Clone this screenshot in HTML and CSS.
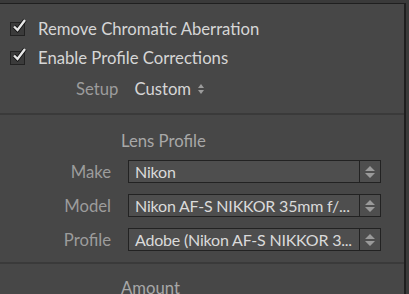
FILE: index.html
```html
<!DOCTYPE html>
<html lang="en">
<head>
    <meta charset="UTF-8">
    <title>Lens Corrections</title>
    <link rel="stylesheet" href="styles.css">
</head>
<body>
    <div class="frame">
        <div class="panel">
            <div class="checks">
                <label class="check-row"><span class="box"><svg viewBox="0 0 16 16" width="16" height="16"><path d="M3 8.5 L6.5 12 L14 2" fill="none" stroke="#111" stroke-width="4"/><path d="M3 8.5 L6.5 12 L14 2" fill="none" stroke="#e6e6e6" stroke-width="2.4"/></svg></span>Remove Chromatic Aberration</label>
                <label class="check-row"><span class="box"><svg viewBox="0 0 16 16" width="16" height="16"><path d="M3 8.5 L6.5 12 L14 2" fill="none" stroke="#111" stroke-width="4"/><path d="M3 8.5 L6.5 12 L14 2" fill="none" stroke="#e6e6e6" stroke-width="2.4"/></svg></span>Enable Profile Corrections</label>
            </div>
            <div class="setup">
                <span class="dim">Setup</span>
                <span class="value">Custom</span>
                <svg class="updown" viewBox="0 0 6 10" width="6" height="10"><path d="M3 0 L6 4 L0 4 Z M0 6 L6 6 L3 10 Z" fill="#9c9c9c"/></svg>
            </div>
            <div class="divider"></div>
            <div class="section-title">Lens Profile</div>
            <div class="field">
                <span class="dim label">Make</span>
                <div class="select"><span class="sel-text">Nikon</span><span class="sel-btn"><svg viewBox="0 0 12 14" width="12" height="14"><path d="M6 1 L11 6 L1 6 Z M1 8 L11 8 L6 13 Z" fill="#9a9a9a"/></svg></span></div>
            </div>
            <div class="field">
                <span class="dim label">Model</span>
                <div class="select"><span class="sel-text">Nikon AF-S NIKKOR 35mm f/...</span><span class="sel-btn"><svg viewBox="0 0 12 14" width="12" height="14"><path d="M6 1 L11 6 L1 6 Z M1 8 L11 8 L6 13 Z" fill="#9a9a9a"/></svg></span></div>
            </div>
            <div class="field">
                <span class="dim label">Profile</span>
                <div class="select"><span class="sel-text">Adobe (Nikon AF-S NIKKOR 3...</span><span class="sel-btn"><svg viewBox="0 0 12 14" width="12" height="14"><path d="M6 1 L11 6 L1 6 Z M1 8 L11 8 L6 13 Z" fill="#9a9a9a"/></svg></span></div>
            </div>
            <div class="divider second"></div>
            <div class="section-title last">Amount</div>
        </div>
    </div>
</body>
</html>
```

FILE: styles.css
```css
body {
    margin: 0;
    background-color: #3a3a3a;
    font-family: "Lato", "Liberation Sans", sans-serif;
    height: 294px;
    overflow: hidden;
}
.frame {
    display: flex;
    padding-top: 3px;
    padding-right: 3px;
    background-color: #3a3a3a;
}
.panel {
    flex: 1;
    background-color: #474747;
    border-top: 1px solid #1f1f1f;
    border-right: 2px solid #1f1f1f;
    height: 290px;
    overflow: hidden;
}
.checks {
    padding: 10px 0 0 10px;
}
.check-row {
    display: flex;
    align-items: center;
    height: 29px;
    color: #d6d6d6;
    font-size: 16.7px;
}
.box {
    position: relative;
    width: 13px;
    height: 12px;
    border: 1px solid #222;
    background-color: #3b3b3b;
    margin-right: 13px;
}
.box svg {
    position: absolute;
    left: 0;
    top: -5px;
}
.setup {
    display: flex;
    align-items: center;
    padding-left: 76px;
    margin-top: 2px;
    height: 30px;
    font-size: 16.7px;
}
.dim {
    color: #9c9c9c;
}
.value {
    color: #d6d6d6;
    margin-left: 16px;
}
.updown {
    margin-left: 7px;
}
.divider {
    height: 2px;
    background-color: #3a3a3a;
    margin-top: 9px;
}
.section-title {
    color: #a8a8a8;
    font-size: 16.7px;
    padding-left: 121px;
    margin-top: 16px;
    height: 29px;
}
.section-title.last {
    margin-top: 14px;
}
.field {
    display: flex;
    align-items: center;
    margin-bottom: 11px;
}
.label {
    width: 111px;
    text-align: right;
    font-size: 16.7px;
    margin-right: 17px;
}
.select {
    display: flex;
    width: 251px;
    height: 21px;
    border: 1px solid #222;
    background-color: #4e4e4e;
}
.sel-text {
    flex: 1;
    color: #dadada;
    font-size: 16px;
    line-height: 21px;
    padding-left: 6px;
    white-space: nowrap;
    overflow: hidden;
    letter-spacing: -0.2px;
}
.sel-btn {
    width: 20px;
    border-left: 1px solid #222;
    display: flex;
    align-items: center;
    justify-content: center;
}
.divider.second {
    margin-top: 7px;
}
```
